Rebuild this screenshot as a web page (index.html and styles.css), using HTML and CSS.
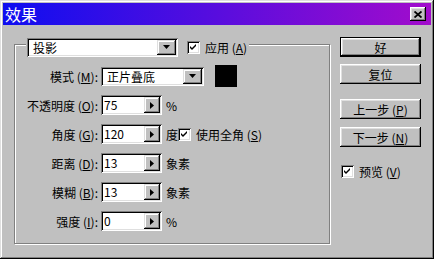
FILE: index.html
```html
<!DOCTYPE html>
<html lang="zh-CN">
<head>
    <meta charset="UTF-8">
    <title>效果</title>
    <link rel="stylesheet" href="styles.css">
</head>
<body>
    <div class="window">
        <div class="titlebar">
            <span class="title">效果</span>
            <span class="close-btn">
                <svg width="8" height="7" viewBox="0 0 8 7"><path d="M0.5 0.5 L7.5 6.5 M7.5 0.5 L0.5 6.5" stroke="#000" stroke-width="1.8"/></svg>
            </span>
        </div>
        <div class="content">
            <div class="group">
                <div class="group-head">
                    <div class="select select-effect">
                        <span class="select-text">投影</span>
                        <span class="select-btn"><svg width="7" height="4" viewBox="0 0 7 4"><polygon points="0,0 7,0 3.5,4" fill="#000"/></svg></span>
                    </div>
                    <span class="check check-apply"><svg width="7" height="7" viewBox="0 0 7 7"><path d="M0 2 L2 4 L6 0 L6 2 L2 6 L0 4 Z" fill="#000"/></svg></span>
                    <span class="check-label">应用 (<u>A</u>)</span>
                </div>
                <div class="rows">
                    <div class="row">
                        <span class="label">模式 (<u>M</u>):</span>
                        <div class="select select-mode">
                            <span class="select-text">正片叠底</span>
                            <span class="select-btn"><svg width="7" height="4" viewBox="0 0 7 4"><polygon points="0,0 7,0 3.5,4" fill="#000"/></svg></span>
                        </div>
                        <span class="swatch"></span>
                    </div>
                    <div class="row">
                        <span class="label">不透明度 (<u>O</u>):</span>
                        <div class="field"><span class="field-text">75</span><span class="spin-btn"><svg width="4" height="7" viewBox="0 0 4 7"><polygon points="0,0 4,3.5 0,7" fill="#000"/></svg></span></div>
                        <span class="unit">%</span>
                    </div>
                    <div class="row">
                        <span class="label">角度 (<u>G</u>):</span>
                        <div class="field"><span class="field-text">120</span><span class="spin-btn"><svg width="4" height="7" viewBox="0 0 4 7"><polygon points="0,0 4,3.5 0,7" fill="#000"/></svg></span></div>
                        <span class="unit">度</span>
                        <span class="check"><svg width="7" height="7" viewBox="0 0 7 7"><path d="M0 2 L2 4 L6 0 L6 2 L2 6 L0 4 Z" fill="#000"/></svg></span>
                        <span class="check-label">使用全角 (<u>S</u>)</span>
                    </div>
                    <div class="row">
                        <span class="label">距离 (<u>D</u>):</span>
                        <div class="field"><span class="field-text">13</span><span class="spin-btn"><svg width="4" height="7" viewBox="0 0 4 7"><polygon points="0,0 4,3.5 0,7" fill="#000"/></svg></span></div>
                        <span class="unit">象素</span>
                    </div>
                    <div class="row">
                        <span class="label">模糊 (<u>B</u>):</span>
                        <div class="field"><span class="field-text">13</span><span class="spin-btn"><svg width="4" height="7" viewBox="0 0 4 7"><polygon points="0,0 4,3.5 0,7" fill="#000"/></svg></span></div>
                        <span class="unit">象素</span>
                    </div>
                    <div class="row">
                        <span class="label">强度 (<u>I</u>):</span>
                        <div class="field"><span class="field-text">0</span><span class="spin-btn"><svg width="4" height="7" viewBox="0 0 4 7"><polygon points="0,0 4,3.5 0,7" fill="#000"/></svg></span></div>
                        <span class="unit">%</span>
                    </div>
                </div>
            </div>
            <div class="actions">
                <button class="btn btn-default">好</button>
                <button class="btn btn-reset">复位</button>
                <button class="btn btn-prev">上一步 (<u>P</u>)</button>
                <button class="btn btn-next">下一步 (<u>N</u>)</button>
                <div class="preview">
                    <span class="check"><svg width="7" height="7" viewBox="0 0 7 7"><path d="M0 2 L2 4 L6 0 L6 2 L2 6 L0 4 Z" fill="#000"/></svg></span>
                    <span class="check-label">预览 (<u>V</u>)</span>
                </div>
            </div>
        </div>
    </div>
</body>
</html>
```

FILE: styles.css
```css
body {
    margin: 0;
    font-family: "Noto Sans CJK SC", "Liberation Sans", sans-serif;
    font-size: 12px;
    color: #000;
}

.window {
    width: 434px;
    height: 259px;
    box-sizing: border-box;
    padding: 3px;
    background: #c0c0c0;
    box-shadow: inset -1px -1px #000, inset 1px 1px #dfdfdf, inset -2px -2px #808080, inset 2px 2px #fff;
    display: flex;
    flex-direction: column;
}

.titlebar {
    height: 22px;
    display: flex;
    align-items: center;
    justify-content: space-between;
    padding: 0 5px 0 2px;
    background: linear-gradient(90deg, #0e0ef0, #a20ccc);
    color: #fff;
}

.title {
    font-size: 16px;
    line-height: 22px;
}

.close-btn {
    width: 16px;
    height: 14px;
    display: flex;
    align-items: center;
    justify-content: center;
    background: #c0c0c0;
    box-shadow: inset -1px -1px #000, inset 1px 1px #fff, inset -2px -2px #808080, inset 2px 2px #dfdfdf;
}

.content {
    display: flex;
    flex: 1;
    padding-left: 11px;
}

/* group box */
.group {
    width: 316px;
    height: 200px;
    box-sizing: border-box;
    margin-top: 19px;
    border: 1px solid #808080;
    box-shadow: 1px 1px 0 #fff, inset 1px 1px 0 #fff;
    display: flex;
    flex-direction: column;
}

.group-head {
    align-self: flex-start;
    display: flex;
    align-items: center;
    height: 20px;
    margin: -8px 0 0 11px;
    padding: 0 2px 0 1px;
    background: #c0c0c0;
}

.select {
    display: flex;
    height: 19px;
    box-sizing: border-box;
    padding: 2px;
    background: #fff;
    box-shadow: inset 1px 1px #808080, inset -1px -1px #fff, inset 2px 2px #000, inset -2px -2px #dfdfdf;
}

.select-effect {
    width: 151px;
}

.select-mode {
    width: 103px;
}

.select-text {
    flex: 1;
    padding-left: 4px;
    line-height: 15px;
}

.select-btn,
.spin-btn {
    display: flex;
    align-items: center;
    justify-content: center;
    background: #c0c0c0;
    box-shadow: inset -1px -1px #000, inset 1px 1px #dfdfdf, inset -2px -2px #808080, inset 2px 2px #fff;
}

.select-btn {
    width: 19px;
}

.check {
    width: 13px;
    height: 13px;
    flex: none;
    box-sizing: border-box;
    display: flex;
    align-items: center;
    justify-content: center;
    background: #fff;
    box-shadow: inset 1px 1px #808080, inset -1px -1px #fff, inset 2px 2px #000, inset -2px -2px #dfdfdf;
}

.check-apply {
    margin-left: 9px;
}

.check-label {
    margin-left: 5px;
    white-space: nowrap;
}

/* rows */
.rows {
    display: flex;
    flex-direction: column;
    gap: 9px;
    margin-top: 9px;
}

.row {
    display: flex;
    align-items: center;
    height: 20px;
}

.label {
    width: 83px;
    margin-right: 3px;
    text-align: right;
    white-space: nowrap;
}

.swatch {
    width: 22px;
    height: 22px;
    flex: none;
    margin-left: 11px;
    background: #000;
}

.field {
    display: flex;
    width: 61px;
    height: 20px;
    box-sizing: border-box;
    padding: 2px;
    background: #fff;
    box-shadow: inset 1px 1px #808080, inset -1px -1px #fff, inset 2px 2px #000, inset -2px -2px #dfdfdf;
}

.field-text {
    flex: 1;
    padding-left: 1px;
    line-height: 16px;
}

.spin-btn {
    width: 16px;
}

.unit {
    margin-left: 4px;
}

/* buttons */
.actions {
    display: flex;
    flex-direction: column;
    width: 81px;
    margin: 12px 0 0 10px;
}

.btn {
    height: 20px;
    padding: 0;
    border: 0;
    font: inherit;
    color: #000;
    background: #c0c0c0;
    box-shadow: inset -1px -1px #000, inset 1px 1px #fff, inset -2px -2px #808080, inset 2px 2px #dfdfdf;
}

.btn-default {
    box-shadow: inset 0 0 0 1px #000, inset -2px -2px #000, inset 2px 2px #fff, inset -3px -3px #808080, inset 3px 3px #dfdfdf;
}

.btn-reset {
    margin-top: 7px;
}

.btn-prev {
    margin-top: 15px;
}

.btn-next {
    margin-top: 8px;
}

.preview {
    display: flex;
    align-items: center;
    margin: 16px 0 0 1px;
}
```
